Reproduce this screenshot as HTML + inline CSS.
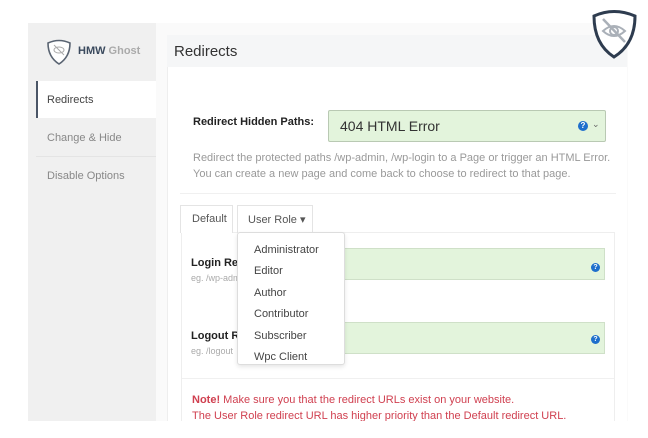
<!DOCTYPE html>
<html><head><style>
*{margin:0;padding:0;box-sizing:border-box}
body{width:648px;height:438px;background:#fff;font-family:"Liberation Sans",sans-serif;position:relative;overflow:hidden;color:#333}
.a{position:absolute}
</style></head><body>
<div class="a" style="left:28px;top:23px;width:128px;height:398px;background:#f0f0f0"></div>
<div class="a" style="left:156px;top:23px;width:472px;height:398px;background:#fafafa"></div>
<svg class="a" style="left:46px;top:39px" width="26" height="27" viewBox="0 0 26 27"><path d="M2 4 Q13 -1 24 4 Q24 18 13 25 Q2 18 2 4Z" fill="#fff" stroke="#5a6472" stroke-width="1.6"/><ellipse cx="13" cy="11" rx="5" ry="3" fill="none" stroke="#aaa" stroke-width="1"/><line x1="8" y1="6" x2="18" y2="16" stroke="#aaa"/></svg>
<div class="a" style="left:78px;top:45px;font-size:11px;font-weight:bold;color:#3b4a5e">HMW <span style="color:#aaa">Ghost</span></div>
<div class="a" style="left:36px;top:81px;width:120px;height:37px;background:#fff;border-left:2px solid #4a5566"></div>
<div class="a" style="left:47px;top:94px;font-size:11px;color:#444">Redirects</div>
<div class="a" style="left:47px;top:132px;font-size:11px;color:#888">Change &amp; Hide</div>
<div class="a" style="left:36px;top:156px;width:120px;height:1px;background:#e4e4e4"></div>
<div class="a" style="left:47px;top:170px;font-size:11px;color:#888">Disable Options</div>
<div class="a" style="left:167px;top:35px;width:460px;height:386px;background:#fff;border-top:1px solid #e8e8e8;border-left:1px solid #eee"></div>
<div class="a" style="left:167px;top:35px;width:460px;height:32px;background:#f5f6f7"></div>
<div class="a" style="left:174px;top:43px;font-size:15px;color:#333">Redirects</div>
<div class="a" style="left:193px;top:116px;font-size:11px;font-weight:bold;color:#222">Redirect Hidden Paths:</div>
<div class="a" style="left:328px;top:110px;width:278px;height:32px;background:#e3f4dc;border:1px solid #b9c9b3;border-radius:2px"></div>
<div class="a" style="left:340px;top:118px;font-size:14px;color:#333">404 HTML Error</div>
<div class="a" style="left:578px;top:121px;width:10px;height:10px;border-radius:50%;background:#1f6fcc;color:#fff;font-size:8px;font-weight:bold;text-align:center;line-height:10px">?</div>
<div class="a" style="left:592px;top:119px;font-size:9px;color:#666">&#8964;</div>
<div class="a" style="left:193px;top:150px;font-size:11px;color:#999;line-height:16px">Redirect the protected paths /wp-admin, /wp-login to a Page or trigger an HTML Error.<br>You can create a new page and come back to choose to redirect to that page.</div>
<div class="a" style="left:180px;top:193px;width:436px;height:1px;background:#f0f0f0"></div>
<div class="a" style="left:181px;top:232px;width:434px;height:189px;border:1px solid #eee;border-bottom:none"></div>
<div class="a" style="left:180px;top:205px;width:53px;height:28px;border:1px solid #e4e4e4;border-bottom:none;background:#fff"></div>
<div class="a" style="left:192px;top:213px;font-size:11px;color:#555">Default</div>
<div class="a" style="left:237px;top:205px;width:76px;height:28px;border:1px solid #e4e4e4;border-bottom:none;background:#fff"></div>
<div class="a" style="left:248px;top:213px;font-size:11px;color:#555">User Role &#9662;</div>
<div class="a" style="left:191px;top:257px;font-size:11px;font-weight:bold;color:#222">Login Redirect</div>
<div class="a" style="left:191px;top:273px;font-size:9px;color:#aaa">eg. /wp-admin</div>
<div class="a" style="left:330px;top:248px;width:275px;height:32px;background:#e3f4dc;border:1px solid #cfe0c8"></div>
<div class="a" style="left:591px;top:263px;width:9px;height:9px;border-radius:50%;background:#1f6fcc;color:#fff;font-size:7px;font-weight:bold;text-align:center;line-height:9px">?</div>
<div class="a" style="left:191px;top:330px;font-size:11px;font-weight:bold;color:#222">Logout Redirect</div>
<div class="a" style="left:191px;top:346px;font-size:9px;color:#aaa">eg. /logout</div>
<div class="a" style="left:330px;top:322px;width:275px;height:32px;background:#e3f4dc;border:1px solid #cfe0c8"></div>
<div class="a" style="left:591px;top:335px;width:9px;height:9px;border-radius:50%;background:#1f6fcc;color:#fff;font-size:7px;font-weight:bold;text-align:center;line-height:9px">?</div>
<div class="a" style="left:237px;top:232px;width:108px;height:133px;background:#fff;border:1px solid #ddd;border-radius:3px;box-shadow:0 2px 4px rgba(0,0,0,.1)"></div>
<div class="a" style="left:254px;top:240px;font-size:11px;color:#444;line-height:21.4px">Administrator<br>Editor<br>Author<br>Contributor<br>Subscriber<br>Wpc Client</div>
<div class="a" style="left:182px;top:378px;width:432px;height:1px;background:#f0f0f0"></div>
<div class="a" style="left:192px;top:392px;font-size:11px;color:#d04050;line-height:16px"><b>Note!</b> Make sure you that the redirect URLs exist on your website.<br>The User Role redirect URL has higher priority than the Default redirect URL.</div>
<div class="a" style="left:0px;top:421px;width:648px;height:17px;background:#fff"></div>
<svg class="a" style="left:591px;top:9px" width="47" height="51" viewBox="0 0 47 51"><path d="M3 7 Q23 -2 44 7 Q44 35 23 48 Q3 35 3 7Z" fill="#fff" stroke="#2e3c4f" stroke-width="3"/><path d="M12 22 Q23 12 34 22 Q23 32 12 22Z" fill="none" stroke="#aab0b8" stroke-width="2"/><circle cx="23" cy="22" r="4" fill="none" stroke="#aab0b8" stroke-width="2"/><line x1="12" y1="10" x2="34" y2="33" stroke="#aab0b8" stroke-width="2.5"/></svg>
</body></html>
